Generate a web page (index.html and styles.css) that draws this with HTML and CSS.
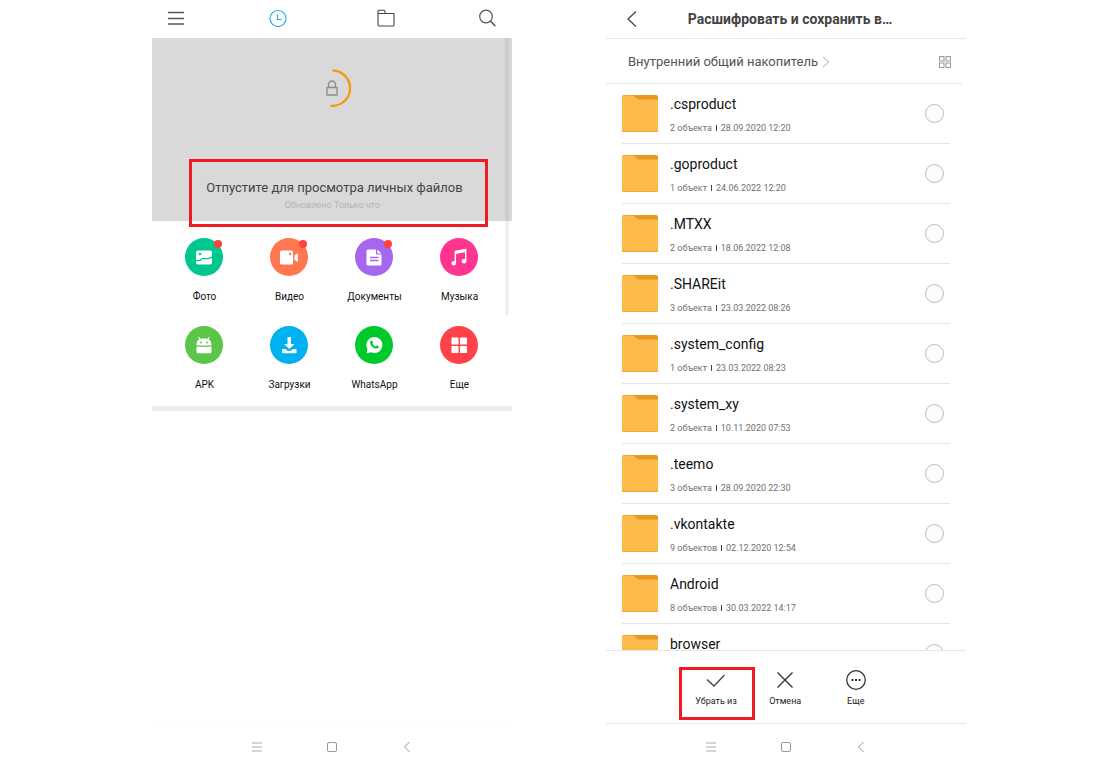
FILE: index.html
```html
<!DOCTYPE html>
<html lang="ru">
<head>
<meta charset="utf-8">
<meta name="viewport" content="width=device-width, initial-scale=1">
<title>Проводник: личные файлы</title>
<link rel="stylesheet" href="styles.css">
</head>
<body>
<svg class="sprite" aria-hidden="true">
  <symbol id="folder" viewBox="0 0 36 37">
    <rect width="36" height="37" rx="2" fill="#e8981f"/>
    <path d="M0 2a1.500 1.500 0 0 1 1.500-1.500H11L15.500 4q.7.6 1.700.6H36V35a2 2 0 0 1-2 2H2a2 2 0 0 1-2-2z" fill="#fcba4a"/>
    <path d="M0 34.500V35a2 2 0 0 0 2 2H34a2 2 0 0 0 2-2v-.5q-.5 1.500-2 1.500H2q-1.500 0-2-1.500z" fill="#eda93a"/>
  </symbol>
  <symbol id="nav-menu" viewBox="0 0 12 12"><path d="M1 2h10M1 6h10M1 10h10" fill="none" stroke="#aaa"/></symbol>
  <symbol id="nav-home" viewBox="0 0 12 12"><rect x="1.500" y="1.500" width="9" height="9" rx="1.500" fill="none" stroke="#999"/></symbol>
  <symbol id="nav-back" viewBox="0 0 12 12"><path d="M8.500 1 3.500 6l5 5" fill="none" stroke="#999"/></symbol>
</svg>

<main class="screens">
  <section class="phone" aria-label="Недавние">
    <header class="tabs">
      <button type="button" aria-label="Меню"><svg width="18" height="18" viewBox="0 0 18 18" fill="none" stroke="#555" stroke-width="1.300"><path d="M1 3.500h16M1 9.500h16M1 15h16"/></svg></button>
      <div class="tabs-main">
        <button type="button" aria-label="Недавние"><svg width="18" height="18" viewBox="0 0 18 18" fill="none" stroke="#21aee3" stroke-width="1.200"><circle cx="9" cy="9.500" r="8"/><path d="M8.500 5.500v5h4"/></svg></button>
        <button type="button" aria-label="Хранилище"><svg width="18" height="18" viewBox="0 0 18 18" fill="none" stroke="#444" stroke-width="1.100"><path d="M1 4.500h16v11.500a1 1 0 0 1-1 1H2a1 1 0 0 1-1-1zM1 4.500v-2.300q0-1 1-1h4.500q1 0 1.300 1l.9 2.200"/></svg></button>
      </div>
      <button type="button" aria-label="Поиск"><svg width="18" height="18" viewBox="0 0 18 18" fill="none" stroke="#555"><circle cx="8" cy="7.500" r="6.300" stroke-width="1.200"/><path d="m12.300 12 5 5" stroke-width="1.700"/></svg></button>
    </header>

    <div class="content">
      <div class="pull">
        <svg class="spinner" width="38" height="38" viewBox="0 0 38 38" fill="none" aria-hidden="true">
          <path d="M18.500 1.500a17.700 17.700 0 1 1-2 35.300" stroke="#f59a13" stroke-width="2.400"/>
          <path d="M13 18.500h10V26H13zM14.500 18.500v-3a3.500 3.500 0 0 1 7 0v3" stroke="#8c8c8c" stroke-width="1.300"/>
        </svg>
        <div class="message">
          <p class="message-title">Отпустите для просмотра личных файлов</p>
          <p class="message-note">Обновлено Только что</p>
        </div>
      </div>

      <nav class="shortcuts" aria-label="Категории">
        <a href="#photo"><span class="disc green new"><svg width="18" height="18" viewBox="0 0 18 18" fill="#fff"><rect x="1" y="2.500" width="16" height="14" rx="1.800"/><circle cx="5" cy="6" r="1.300" fill="#00c78e"/><path d="M1 12.500c3 .8 4.500-.3 6-1.500s3-.2 4.500-.2 3.500-.6 5.500-1.600" fill="none" stroke="#00c78e" stroke-width="1.300"/></svg></span>Фото</a>
        <a href="#video"><span class="disc orange new"><svg width="18" height="18" viewBox="0 0 18 18" fill="#fff"><rect y="2.500" width="13" height="14" rx="1.500"/><circle cx="10" cy="6" r="1.200" fill="#ff7750"/><path d="M14.300 7.500 17 5.600q1-.5 1 .5v7q0 1-1 .5l-2.700-1.900z"/></svg></span>Видео</a>
        <a href="#docs"><span class="disc purple new"><svg width="18" height="18" viewBox="0 0 18 18" fill="#fff"><path d="M2.500 1.500H11v5h5.500V16q0 1.500-1.500 1.500H3Q1.500 17.500 1.500 16V3q0-1.500 1-1.500zM12.300 1.500l4.200 4h-4.200z"/><path d="M5 9.500h8.500M5 12.500h8.500" stroke="#a667ee" stroke-width="1.300"/></svg></span>Документы</a>
        <a href="#music"><span class="disc pink"><svg width="18" height="18" viewBox="0 0 18 18" fill="none" stroke="#fff"><path d="M5.300 15V3.500L15.700 1.500V13" stroke-width="1.400"/><path d="M5.300 4.500 15.700 2.500" stroke-width="3"/><circle cx="3.800" cy="15.200" r="2.200" fill="#fff" stroke="none"/><circle cx="14" cy="13.200" r="2.300" fill="#fff" stroke="none"/></svg></span>Музыка</a>
        <a href="#apk"><span class="disc lime"><svg width="18" height="18" viewBox="0 0 18 18"><path d="M1.500 9.500C1.500 3 5 2.500 9 2.500s7.500.5 7.500 7zM1.500 10.700h15v5q0 1.500-1.500 1.500H3q-1.500 0-1.500-1.500z" fill="#fff"/><path d="m3.500 1 2 2.500m9-2.500-2 2.500" stroke="#fff" stroke-width="1.200"/><circle cx="6" cy="6.500" r=".9" fill="#5bc547"/><circle cx="12" cy="6.500" r=".9" fill="#5bc547"/></svg></span>APK</a>
        <a href="#downloads"><span class="disc blue"><svg width="18" height="18" viewBox="0 0 18 18" fill="#fff"><path d="M7.500 1h3.500v7h3.500L9.300 13 4 8h3.500zM2 13h3.500q1.500 2 3.800 2t3.700-2h3.500v3.500q0 .8-.8.8H2.800q-.8 0-.8-.8z"/></svg></span>Загрузки</a>
        <a href="#whatsapp"><span class="disc whats"><svg width="18" height="18" viewBox="0 0 18 18"><path d="M1.500 17.300 2.500 13A8 8 0 1 1 6 16.200z" fill="#fff"/><path d="M5.500 5.500c1.200-1.800 2-.8 2.400.3.500 1.200-.7 1.300-.2 2.200.7 1.300 1.600 2 2.600 2.400.9.300 1.200-1.400 2.200-.8 1.200.6 1.700.9 1 1.900-1 1.500-3 1.300-4.800.2C6.500 10.400 4.300 7.700 5.500 5.500z" fill="#00c92c"/></svg></span>WhatsApp</a>
        <a href="#more"><span class="disc red"><svg width="18" height="18" viewBox="0 0 18 18" fill="#fff"><rect x="1.500" y="1.500" width="7" height="7" rx=".6"/><rect x="10" y="1.500" width="7" height="7" rx=".6"/><rect x="1.500" y="10" width="7" height="7" rx=".6"/><rect x="10" y="10" width="7" height="7" rx=".6"/></svg></span>Еще</a>
      </nav>
      <div class="scrollbar"></div>
    </div>

    <footer class="system left-system">
      <button type="button" aria-label="Приложения"><svg width="12" height="12"><use href="#nav-menu"/></svg></button>
      <button type="button" aria-label="Домой"><svg width="12" height="12"><use href="#nav-home"/></svg></button>
      <button type="button" aria-label="Назад"><svg width="12" height="12"><use href="#nav-back"/></svg></button>
    </footer>
  </section>

  <section class="phone" aria-label="Выбор папки">
    <header class="title-bar">
      <button type="button" aria-label="Назад"><svg width="12" height="18" viewBox="0 0 12 18" fill="none" stroke="#444" stroke-width="1.300"><path d="M10 1.500 2 9l8 7.500"/></svg></button>
      <h1>Расшифровать и сохранить в…</h1>
    </header>
    <div class="path">
      <a href="#storage">Внутренний общий накопитель <svg width="8" height="12" viewBox="0 0 8 12" fill="none" stroke="#aaa"><path d="m1 1 6 5-6 5"/></svg></a>
      <button type="button" aria-label="Сетка"><svg width="14" height="14" viewBox="0 0 14 14" fill="none" stroke="#999"><rect x="1.500" y="1.500" width="4.500" height="4.500"/><rect x="8" y="1.500" width="4.500" height="4.500"/><rect x="1.500" y="8" width="4.500" height="4.500"/><rect x="8" y="8" width="4.500" height="4.500"/></svg></button>
    </div>

    <div class="list">
      <label class="row"><svg class="folder"><use href="#folder"/></svg><span class="info"><span class="name">.csproduct</span><span class="meta"><span>2 объекта</span><i></i><span>28.09.2020 12:20</span></span></span><input type="radio" name="folder"></label>
      <label class="row"><svg class="folder"><use href="#folder"/></svg><span class="info"><span class="name">.goproduct</span><span class="meta"><span>1 объект</span><i></i><span>24.06.2022 12:20</span></span></span><input type="radio" name="folder"></label>
      <label class="row"><svg class="folder"><use href="#folder"/></svg><span class="info"><span class="name">.MTXX</span><span class="meta"><span>2 объекта</span><i></i><span>18.06.2022 12:08</span></span></span><input type="radio" name="folder"></label>
      <label class="row"><svg class="folder"><use href="#folder"/></svg><span class="info"><span class="name">.SHAREit</span><span class="meta"><span>3 объекта</span><i></i><span>23.03.2022 08:26</span></span></span><input type="radio" name="folder"></label>
      <label class="row"><svg class="folder"><use href="#folder"/></svg><span class="info"><span class="name">.system_config</span><span class="meta"><span>1 объект</span><i></i><span>23.03.2022 08:23</span></span></span><input type="radio" name="folder"></label>
      <label class="row"><svg class="folder"><use href="#folder"/></svg><span class="info"><span class="name">.system_xy</span><span class="meta"><span>2 объекта</span><i></i><span>10.11.2020 07:53</span></span></span><input type="radio" name="folder"></label>
      <label class="row"><svg class="folder"><use href="#folder"/></svg><span class="info"><span class="name">.teemo</span><span class="meta"><span>3 объекта</span><i></i><span>28.09.2020 22:30</span></span></span><input type="radio" name="folder"></label>
      <label class="row"><svg class="folder"><use href="#folder"/></svg><span class="info"><span class="name">.vkontakte</span><span class="meta"><span>9 объектов</span><i></i><span>02.12.2020 12:54</span></span></span><input type="radio" name="folder"></label>
      <label class="row"><svg class="folder"><use href="#folder"/></svg><span class="info"><span class="name">Android</span><span class="meta"><span>8 объектов</span><i></i><span>30.03.2022 14:17</span></span></span><input type="radio" name="folder"></label>
      <label class="row"><svg class="folder"><use href="#folder"/></svg><span class="info"><span class="name">browser</span></span><input type="radio" name="folder"></label>
    </div>

    <div class="actions">
      <button type="button" class="marked"><svg width="22" height="20" viewBox="0 0 22 20" fill="none" stroke="#444" stroke-width="1.300"><path d="m2 9.500 7 6.500L19.500 5"/></svg>Убрать из</button>
      <button type="button"><svg width="22" height="22" viewBox="0 0 22 22" fill="none" stroke="#333" stroke-width="1.400"><path d="m3.500 3.500 15 15m0-15-15 15"/></svg>Отмена</button>
      <button type="button"><svg width="22" height="22" viewBox="0 0 22 22" fill="none" stroke="#333" stroke-width="1.300"><circle cx="11" cy="11" r="9.300"/><path d="M6.500 11h2m1.500 0h2m1.500 0h2" stroke-width="1.800"/></svg>Еще</button>
    </div>

    <footer class="system">
      <button type="button" aria-label="Приложения"><svg width="12" height="12"><use href="#nav-menu"/></svg></button>
      <button type="button" aria-label="Домой"><svg width="12" height="12"><use href="#nav-home"/></svg></button>
      <button type="button" aria-label="Назад"><svg width="12" height="12"><use href="#nav-back"/></svg></button>
    </footer>
  </section>
</main>
</body>
</html>
```
FILE: styles.css
```css
* {
  box-sizing: border-box;
}

body {
  margin: 0;
  background: #fff;
  color: #111;
  font-family: Roboto, "Liberation Sans", sans-serif;
}

button {
  display: flex;
  padding: 0;
  border: 0;
  background: none;
  color: inherit;
  font: inherit;
}

a {
  color: inherit;
  text-decoration: none;
}

p,
h1 {
  margin: 0;
}

svg {
  display: block;
  flex: none;
}

.sprite {
  position: absolute;
  width: 0;
  height: 0;
}

.screens {
  display: grid;
  grid-template-columns: 1fr 1fr;
  gap: 94px;
  height: 100vh;
  padding: 0 132px 0 152px;
}

.phone {
  display: flex;
  flex-direction: column;
  min-width: 0;
  min-height: 0;
}

.tabs {
  display: flex;
  flex: none;
  justify-content: space-between;
  align-items: center;
  height: 38px;
  padding: 0 16px 2px 15px;
}

.tabs-main {
  display: flex;
  gap: 90px;
}

.content {
  position: relative;
  flex: 1;
}

.pull {
  display: flex;
  flex-direction: column;
  height: 183px;
  padding: 31px 24px 0 37px;
  background: #d9d9d9;
}

.spinner {
  margin: 0 auto 52px 125px;
}

.message {
  flex: none;
  height: 68px;
  padding: 16px 0 0;
  border: 3px solid #ed1c24;
  text-align: center;
}

.message-title {
  padding-right: 8px;
  color: #444;
  font-size: 13px;
  line-height: 20px;
}

.message-note {
  padding-right: 12px;
  color: #b4b4b4;
  font-size: 9px;
  line-height: 14px;
}

.shortcuts {
  display: grid;
  grid-template-columns: repeat(4, 1fr);
  row-gap: 22px;
  padding: 17px 10px 14px;
  border-bottom: 5px solid #ededed;
  font-size: 10px;
  line-height: 14px;
}

.shortcuts a {
  display: flex;
  flex-direction: column;
  align-items: center;
  gap: 14px;
}

.disc {
  position: relative;
  display: grid;
  place-items: center;
  width: 38px;
  height: 38px;
  margin-right: 1px;
  border-radius: 50%;
}

.new::after {
  position: absolute;
  top: 2px;
  right: 1px;
  width: 8px;
  height: 8px;
  border-radius: 50%;
  background: #ff4140;
  content: "";
}

.green { background: #00c78e; }
.orange { background: #ff7750; }
.purple { background: #a667ee; }
.pink { background: #ff358f; }
.lime { background: #5bc547; }
.blue { background: #00b1f1; }
.whats { background: #00c92c; }
.red { background: #ff4249; }

.scrollbar {
  position: absolute;
  top: 0;
  right: 3px;
  width: 4px;
  height: 277px;
  background: rgb(0 0 0 / 6%);
}

.system {
  display: flex;
  flex: none;
  justify-content: center;
  align-items: center;
  gap: 63px;
  height: 48px;
  padding-bottom: 2px;
  border-top: 1px solid #e8e8e8;
}

.left-system {
  border-color: #fcfcfc;
}

.title-bar {
  display: flex;
  flex: none;
  align-items: center;
  height: 39px;
  padding: 0 20px;
  border-bottom: 1px solid #e6e6e6;
}

.title-bar h1 {
  flex: 1;
  padding-right: 4px;
  color: #444;
  font-size: 14px;
  font-weight: 700;
  line-height: 20px;
  text-align: center;
}

.path {
  display: flex;
  flex: none;
  justify-content: space-between;
  align-items: center;
  height: 45px;
  margin-right: 4px;
  padding: 1px 10px 0 22px;
  border-bottom: 1px solid #e6e6e6;
  color: #555;
  font-size: 13px;
  line-height: 18px;
}

.path a {
  display: flex;
  align-items: center;
  gap: 4px;
}

.list {
  flex: 1;
  min-height: 0;
  overflow: hidden;
  padding: 0 16px;
}

.row {
  display: flex;
  align-items: flex-start;
  gap: 12px;
  height: 60px;
  padding: 11px 6px 0 0;
  border-bottom: 1px solid #e6e6e6;
}

.folder {
  width: 36px;
  height: 37px;
}

.info {
  flex: 1;
}

.name {
  display: block;
  font-size: 14px;
  line-height: 18px;
}

.meta {
  display: flex;
  align-items: center;
  gap: 4px;
  margin-top: 9px;
  color: #707070;
  font-size: 9px;
  line-height: 12px;
}

.meta i {
  width: 1px;
  height: 6px;
  background: #444;
}

.row input {
  width: 19px;
  height: 19px;
  margin: 9px 0 0;
  border: 1px solid #bbb;
  border-radius: 50%;
  background: #fcfdfa;
  appearance: none;
}

.row input:checked {
  border: 5px solid #21aee3;
}

.actions {
  display: grid;
  flex: none;
  grid-template-columns: 76px 3fr 4fr;
  height: 73px;
  padding: 16px 70px 3px 73px;
  border-top: 1px solid #e6e6e6;
  color: #222;
  font-size: 9px;
  line-height: 12px;
}

.actions button {
  flex-direction: column;
  align-items: center;
  gap: 4px;
  padding-top: 2px;
}

.actions .marked {
  gap: 5px;
  padding: 0 2px 0 0;
  border: 3px solid #ed1c24;
}
```
